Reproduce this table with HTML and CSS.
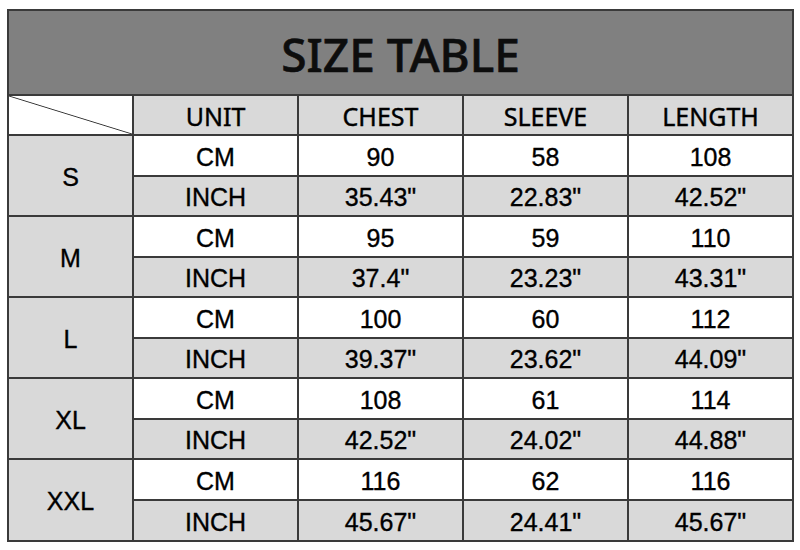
FILE: index.html
```html
<!DOCTYPE html>
<html>
<head>
<meta charset="utf-8">
<link rel="stylesheet" href="styles.css">
</head>
<body>
<table class="size-table">
  <colgroup>
    <col class="c-size"><col class="c-col"><col class="c-col"><col class="c-col"><col class="c-col">
  </colgroup>
  <tr class="r-title"><td colspan="5" class="title">SIZE TABLE</td></tr>
  <tr class="r-head">
    <td class="diag"></td>
    <td class="head">UNIT</td>
    <td class="head">CHEST</td>
    <td class="head">SLEEVE</td>
    <td class="head">LENGTH</td>
  </tr>
  <tr class="r-a"><td rowspan="2" class="size">S</td><td>CM</td><td>90</td><td>58</td><td>108</td></tr>
  <tr class="r-b gray"><td>INCH</td><td>35.43"</td><td>22.83"</td><td>42.52"</td></tr>
  <tr class="r-a"><td rowspan="2" class="size">M</td><td>CM</td><td>95</td><td>59</td><td>110</td></tr>
  <tr class="r-b gray"><td>INCH</td><td>37.4"</td><td>23.23"</td><td>43.31"</td></tr>
  <tr class="r-a"><td rowspan="2" class="size">L</td><td>CM</td><td>100</td><td>60</td><td>112</td></tr>
  <tr class="r-b gray"><td>INCH</td><td>39.37"</td><td>23.62"</td><td>44.09"</td></tr>
  <tr class="r-a"><td rowspan="2" class="size">XL</td><td>CM</td><td>108</td><td>61</td><td>114</td></tr>
  <tr class="r-b gray"><td>INCH</td><td>42.52"</td><td>24.02"</td><td>44.88"</td></tr>
  <tr class="r-a"><td rowspan="2" class="size">XXL</td><td>CM</td><td>116</td><td>62</td><td>116</td></tr>
  <tr class="r-c gray"><td>INCH</td><td>45.67"</td><td>24.41"</td><td>45.67"</td></tr>
</table>
</body>
</html>
```
FILE: styles.css
```css
html, body {
  margin: 0;
  padding: 0;
  background: #fff;
}
body {
  padding: 9px 0 0 7px;
  font-family: "Liberation Sans", Arial, sans-serif;
}
.size-table {
  border-collapse: collapse;
  table-layout: fixed;
  width: 786px;
  border: 2px solid #262626;
}
.c-size { width: 125px; }
.c-col { width: 165px; }
.size-table td {
  border: 2px solid #3a3a3a;
  text-align: center;
  vertical-align: middle;
  padding: 3px 0 0;
  font-size: 25px;
  line-height: 1;
  color: #000;
  -webkit-text-stroke: 0.35px #000;
  background: #fff;
}
.r-title { height: 85px; }
.r-head { height: 40px; }
.r-a { height: 41px; }
.r-b { height: 40px; }
.r-c { height: 41px; }
.size-table td.title {
  background: #808080;
  font-family: "Noto Sans", "Open Sans", sans-serif;
  font-size: 46px;
  font-weight: 500;
  color: #0d0d0d;
  -webkit-text-stroke: 0.6px #0d0d0d;
  padding-top: 2px;
}
.size-table td.head {
  background: #d9d9d9;
  font-family: "Noto Sans", "Open Sans", sans-serif;
  font-size: 25px;
  -webkit-text-stroke: 0.4px #000;
  padding-top: 2px;
}
.size-table td.diag {
  padding: 0;
  background: linear-gradient(to top right, #fff calc(50% - 0.9px), #333 50%, #fff calc(50% + 0.9px));
}
.size-table td.size {
  background: #d9d9d9;
}
.size-table tr.gray td {
  background: #d9d9d9;
}
```
